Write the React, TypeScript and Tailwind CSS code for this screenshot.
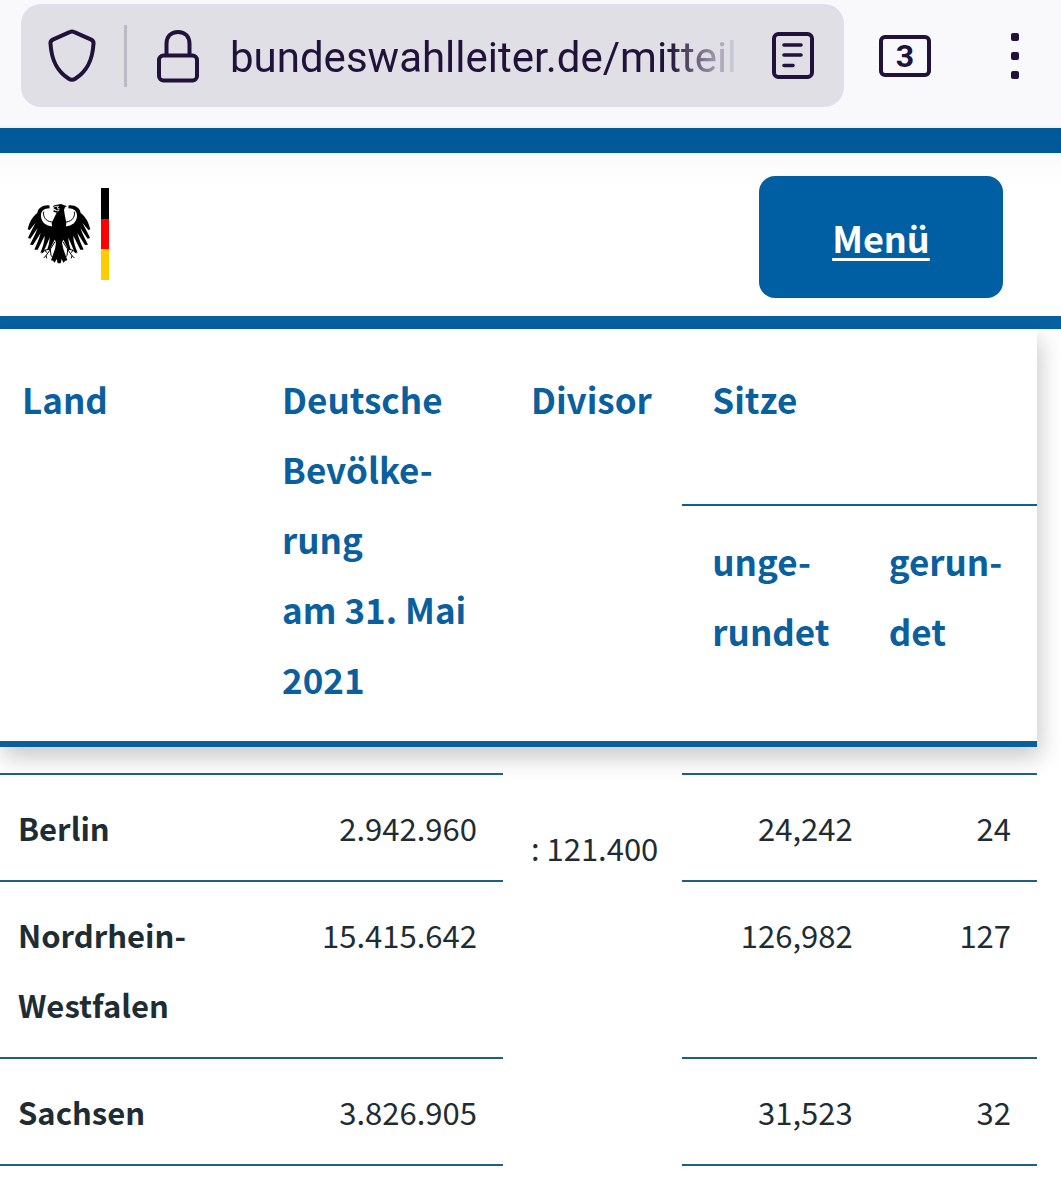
import type { ReactNode } from 'react';

type Row = {
  land: string[];
  population: string;
  unrounded: string;
  rounded: string;
};

const rows: Row[] = [
  { land: ['Berlin'], population: '2.942.960', unrounded: '24,242', rounded: '24' },
  { land: ['Nordrhein-', 'Westfalen'], population: '15.415.642', unrounded: '126,982', rounded: '127' },
  { land: ['Sachsen'], population: '3.826.905', unrounded: '31,523', rounded: '32' },
];

const Lines = ({ text }: { text: string[] }) => (
  <>
    {text.map((line) => (
      <span key={line} className="block whitespace-nowrap">{line}</span>
    ))}
  </>
);

const BrowserBar = () => (
  <div className="flex h-32 items-start border-b-2 border-[#eef3f8] bg-[#f9f9fb] pt-1 pr-[42px] pl-[21px] text-[#20123a]">
    <div className="flex h-[103px] min-w-0 flex-1 items-center rounded-[20px] bg-[#e0dfe6] pr-[30px] pl-[27px]">
      <button aria-label="Tracking protection">
        <svg className="h-[54px] w-12" viewBox="0 0 48 54" fill="none" stroke="currentColor" strokeWidth="4" strokeLinejoin="round">
          <path d="M21.6 3.2 4.8 10.6C3.2 11.4 2.3 12.8 2.5 14.6 3.5 31 8.500 42 20.800 49.800 22.800 51 25.200 51 27.200 49.800 39.500 42 44.500 31 45.500 14.600 45.700 12.800 44.800 11.400 43.200 10.600L26.400 3.200Q24 2 21.600 3.200Z" />
        </svg>
      </button>
      <span className="mr-[30px] ml-7 h-[62px] w-[3px] bg-[#bcbbc5]" />
      <button aria-label="Connection secure">
        <svg className="h-[54px] w-[44px]" viewBox="0 0 44 54" fill="none" stroke="currentColor" strokeWidth="4">
          <rect x="2" y="26.500" width="38" height="25" rx="4.500" />
          <path d="M9.500 26V15C9.500 7.500 14 3 21 3S32.500 7.500 32.500 15V26" />
        </svg>
      </button>
      <input
        aria-label="Address"
        readOnly
        value="bundeswahlleiter.de/mitteilungen"
        className="ml-[29px] min-w-0 flex-1 bg-transparent pt-1 font-[Roboto,sans-serif] text-[42px] leading-[60px] outline-none [mask-image:linear-gradient(to_right,black_86%,transparent)]"
      />
      <button aria-label="Reader view" className="ml-8">
        <svg className="h-12 w-[42px]" viewBox="0 0 42 48" fill="none" stroke="currentColor" strokeWidth="4" strokeLinecap="round">
          <rect x="2" y="2" width="38" height="43" rx="4.500" />
          <path d="M12 13H29M12 23H29M12 33.500H21" strokeWidth="3.600" />
        </svg>
      </button>
    </div>
    <button className="mt-[31px] ml-[35px] flex h-[42px] w-[52px] items-center justify-center rounded-md border-4 border-current font-[Roboto,sans-serif] text-[32px] leading-none font-bold">
      3
    </button>
    <button aria-label="More" className="mt-7 ml-[80px]">
      <svg className="h-12 w-2" viewBox="0 0 8 48" fill="currentColor">
        <rect y="1" width="8" height="8" rx="2" />
        <rect y="20" width="8" height="8" rx="2" />
        <rect y="39" width="8" height="8" rx="2" />
      </svg>
    </button>
  </div>
);

// One half of the federal eagle, mirrored for the other side
const EagleHalf = () => (
  <g>
    <path
      d="M120 105C100 103 86 113 84 128 74 135 62 148 55 177L61 179 79 157C69 176 61 190 56 203L63 205 85 173C77 194 69 209 62 223L71 224 94 188C89 206 82 223 75 238L85 238 106 196C106 214 100 231 93 247L102 246 121 202C121 215 117 228 113 239L122 236 136 208 149 206V148L133 168C112 170 96 156 95 138 94 122 104 114 121 114Z"
      fill="black"
    />
    <path d="M103 124C100 142 112 157 136 155" fill="none" stroke="black" strokeWidth="3" />
    <g fill="none" stroke="black" strokeWidth="3" strokeLinecap="round" strokeLinejoin="round">
      <path d="M136 216 122 238M121 237 108 239 98 248M108 240 111 246M122 239 110 256 112 263M123 238 125 255 130 261M110 256 104 262" />
    </g>
  </g>
);

const Eagle = () => (
  <svg className="h-[62px] w-16" viewBox="53 98 192 186" aria-hidden="true">
    <EagleHalf />
    <g transform="translate(298 0) scale(-1 1)">
      <EagleHalf />
    </g>
    <path
      d="M143 103 155 101 165 105 173 108 167 111 164 118 166 132 171 158 167 193 158 218 162 236 174 270 168 271 162 277 157 266 154 279H145L142 266 136 277 131 271 125 270 137 236 140 218 132 193 127 158 137 137 142 127 132 124 133 120 141 118 131 113 136 111 130 108 137 104Z"
      fill="black"
    />
    <path d="M135 108H148L143 113 151 116M136 121 149 119 145 124" fill="none" stroke="white" strokeWidth="2.500" />
  </svg>
);

const SiteHeader = () => (
  <header className="flex items-start justify-between border-t-[25px] border-b-[13px] border-t-[#005a9a] border-b-[#0860a0] bg-linear-to-b from-[#fafafa] to-white to-20% pt-[23px] pr-[58px] pb-[18px] pl-[27px]">
    <a href="#start" aria-label="Startseite" className="mt-3 flex items-center gap-[10px]">
      <Eagle />
      <span className="flex h-[92px] w-2 flex-col">
        <span className="flex-1 bg-black" />
        <span className="flex-1 bg-[#f00]" />
        <span className="flex-1 bg-[#fc0]" />
      </span>
    </a>
    <button className="flex h-[122px] w-[244px] items-center justify-center rounded-2xl bg-[#005fa3] text-[36px] font-bold text-white underline decoration-[3px] underline-offset-[5px]">
      Menü
    </button>
  </header>
);

const HeadCell = ({ children, className = '', rowSpan, colSpan }: {
  children: ReactNode,
  className?: string,
  rowSpan?: number,
  colSpan?: number
}) => (
  <th
    scope="col"
    rowSpan={rowSpan}
    colSpan={colSpan}
    className={`border-[#0a5f9e] pr-0 text-left align-top font-bold ${className}`}
  >
    {children}
  </th>
);

const line = 'border-b-2 border-[#1c6088]';

const SeatsTable = () => (
  <table className="w-full table-fixed border-separate border-spacing-0 leading-[70px]">
    <colgroup>
      <col className="w-[24.5%]" />
      <col className="w-[24%]" />
      <col className="w-[17.3%]" />
      <col className="w-[17.2%]" />
      <col className="w-[17%]" />
    </colgroup>
    <thead className="bg-white text-[35px] text-[#0a5f9e] shadow-[3px_10px_22px_rgba(0,0,0,0.22)]">
      <tr>
        <HeadCell rowSpan={2} className="border-b-[6px] pt-[35px] pl-[22px]">Land</HeadCell>
        <HeadCell rowSpan={2} className="border-b-[6px] pt-[35px] pb-[27px] pl-7">
          <Lines text={['Deutsche', 'Bevölke-', 'rung', 'am 31. Mai', '2021']} />
        </HeadCell>
        <HeadCell rowSpan={2} className="border-b-[6px] pt-[35px] pl-7">Divisor</HeadCell>
        <HeadCell colSpan={2} className="h-[177px] border-b-2 pt-[35px] pl-[30px]">Sitze</HeadCell>
      </tr>
      <tr>
        <HeadCell className="border-b-[6px] pt-5 pl-[30px]"><Lines text={['unge-', 'rundet']} /></HeadCell>
        <HeadCell className="border-b-[6px] pt-5 pl-7"><Lines text={['gerun-', 'det']} /></HeadCell>
      </tr>
    </thead>
    <tbody className="text-[31px] text-[#1e2d33]">
      <tr className="h-7">
        <td colSpan={2} className={line} />
        <td rowSpan={rows.length + 1} className="pt-[66px] pr-6 text-right align-top whitespace-nowrap">: 121.400</td>
        <td colSpan={2} className={line} />
      </tr>
      {rows.map((row) => (
        <tr key={row.population} className="align-top">
          <th scope="row" className={`${line} pt-[18px] pb-[17px] pl-[18px] text-left font-bold`}><Lines text={row.land} /></th>
          <td className={`${line} pt-[18px] pr-[26px] text-right`}>{row.population}</td>
          <td className={`${line} pt-[18px] pr-2 text-right`}>{row.unrounded}</td>
          <td className={`${line} pt-[18px] pr-[26px] text-right`}>{row.rounded}</td>
        </tr>
      ))}
    </tbody>
  </table>
);

export default function App() {
  return (
    <div className="min-h-screen overflow-hidden bg-white font-['Noto_Sans_CJK_SC',sans-serif]">
      <BrowserBar />
      <SiteHeader />
      <main className="pr-6">
        <SeatsTable />
      </main>
    </div>
  );
}
